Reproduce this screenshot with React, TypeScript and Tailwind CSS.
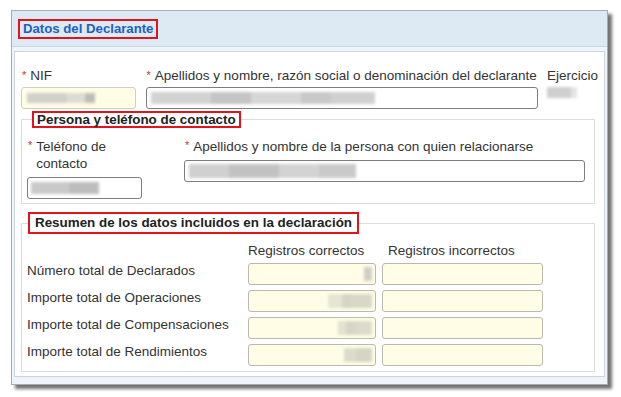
const blurBox = "block blur-[1.5px]";

function Req() {
    return <span className="text-[#d0312d] text-[11px] leading-[15px] mr-[4px]">*</span>;
}

// masked value, drawn as soft grey blocks
function Masked({ parts }: { parts: { w: number; c: string }[] }) {
    return (
        <span className={`${blurBox} flex h-full`}>
            {parts.map((p, i) => (
                <span key={i} className="h-full" style={{ width: p.w, backgroundColor: p.c }} />
            ))}
        </span>
    );
}

const rows = [
    { label: "Número total de Declarados", mask: [{ w: 8, c: "#cfcfc7" }] },
    { label: "Importe total de Operaciones", mask: [{ w: 14, c: "#e6e5d2" }, { w: 10, c: "#d5d4c6" }, { w: 20, c: "#d9d8c8" }] },
    { label: "Importe total de Compensaciones", mask: [{ w: 8, c: "#e3e2cf" }, { w: 10, c: "#d7d6c6" }, { w: 16, c: "#dcdbca" }] },
    { label: "Importe total de Rendimientos", mask: [{ w: 12, c: "#dddccb" }, { w: 16, c: "#d6d5c5" }] },
];

export default function App() {
    return (
        <div className="min-h-screen bg-white pl-[11px] pt-[10px] text-[13.5px] text-[#333] font-['Liberation_Sans',Arial,sans-serif]">
            <div className="w-[597px] h-[375px] border border-[#a3adb7] bg-[#eef4f9] shadow-[4px_4px_3px_rgba(0,0,0,0.55)]">
                {/* Header */}
                <div className="h-[36px] bg-[#dde9f3] border-b border-[#c8d7e4] flex items-center pl-[6px]">
                    <span className="border-2 border-[#e3121b] px-[3px] leading-[16px] font-bold text-[13.2px] text-[#1d5fbf]">
                        Datos del Declarante
                    </span>
                </div>

                <div className="mx-[2px] mt-[4px] h-[326px] bg-white border border-[#cdd5dd] px-[6px] pt-[16px]">
                    {/* Row 1 */}
                    <div className="flex items-start">
                        <div className="w-[115px] flex flex-col">
                            <div className="flex leading-[15px] pl-[1px]"><Req />NIF</div>
                            <div className="mt-[4px] h-[22px] bg-[#fffde6] border border-[#cfcfc4] rounded-[3px] px-[5px] py-[5px]">
                                <Masked parts={[{ w: 40, c: "#d0d0cc" }, { w: 18, c: "#dcdcd6" }, { w: 10, c: "#bdbdb8" }]} />
                            </div>
                        </div>
                        <div className="ml-[10px] w-[394px] flex flex-col">
                            <div className="flex leading-[15px] pl-[1px] whitespace-nowrap"><Req />Apellidos y nombre, razón social o denominación del declarante</div>
                            <div className="mt-[4px] h-[22px] bg-white border border-[#7d7d7d] rounded-[3px] px-[4px] py-[4px]">
                                <Masked parts={[{ w: 60, c: "#d2d2d2" }, { w: 40, c: "#c4c4c4" }, { w: 50, c: "#d6d6d6" }, { w: 30, c: "#c8c8c8" }, { w: 44, c: "#d0d0d0" }]} />
                            </div>
                        </div>
                        <div className="ml-[9px] flex flex-col">
                            <div className="leading-[15px]">Ejercicio</div>
                            <div className="mt-[4px] h-[11px] w-[30px]">
                                <Masked parts={[{ w: 24, c: "#cfcfcf" }, { w: 6, c: "#e4e4e4" }]} />
                            </div>
                        </div>
                    </div>

                    {/* Persona y teléfono de contacto */}
                    <fieldset className="mt-[2px] w-[574px] border border-[#dcdcdc] px-[5px] pb-[4px]">
                        <legend className="ml-[5px] border-2 border-[#e3121b] px-[3px] leading-[13px] font-bold text-[13.4px] text-[#222]">
                            Persona y teléfono de contacto
                        </legend>
                        <div className="flex items-start mt-[10px]">
                            <div className="w-[115px] flex flex-col">
                                <div className="flex leading-[17px] pl-[1px]"><Req /><span>Teléfono de contacto</span></div>
                                <div className="mt-[5px] h-[22px] bg-white border border-[#7d7d7d] rounded-[3px] px-[3px] py-[4px]">
                                    <Masked parts={[{ w: 38, c: "#c9c9c9" }, { w: 30, c: "#bdbdbd" }]} />
                                </div>
                            </div>
                            <div className="ml-[42px] w-[401px] flex flex-col">
                                <div className="flex leading-[17px] pl-[1px]"><Req />Apellidos y nombre de la persona con quien relacionarse</div>
                                <div className="mt-[5px] h-[22px] bg-white border border-[#7d7d7d] rounded-[3px] px-[4px] py-[3px]">
                                    <Masked parts={[{ w: 40, c: "#d0d0d0" }, { w: 50, c: "#c2c2c2" }, { w: 40, c: "#d3d3d3" }, { w: 37, c: "#cacaca" }]} />
                                </div>
                            </div>
                        </div>
                    </fieldset>

                    {/* Resumen */}
                    <fieldset className="mt-[8px] w-[574px] border border-[#dcdcdc] pl-[5px] pb-[5px]">
                        <legend className="ml-[1px] border-2 border-[#e3121b] px-[5px] leading-[18px] font-bold text-[13.4px] text-[#222]">
                            Resumen de los datos incluidos en la declaración
                        </legend>
                        <div className="grid grid-cols-[215px_128px_161px] gap-x-[6px] gap-y-[5px] mt-[9px]">
                            <div />
                            <div className="leading-[15px] whitespace-nowrap">Registros correctos</div>
                            <div className="leading-[15px] whitespace-nowrap pl-[6px]">Registros incorrectos</div>
                            {rows.map((r) => (
                                <div key={r.label} className="contents">
                                    <div className="leading-[15px] whitespace-nowrap">{r.label}</div>
                                    <div className="h-[22px] bg-[#fffde6] border border-[#b9b9b1] rounded-[3px] flex justify-end items-center pr-[3px] py-[3px]">
                                        <span className="h-[14px]"><Masked parts={r.mask} /></span>
                                    </div>
                                    <div className="h-[22px] bg-[#fffde6] border border-[#b9b9b1] rounded-[3px]" />
                                </div>
                            ))}
                        </div>
                    </fieldset>
                </div>
            </div>
        </div>
    );
}
